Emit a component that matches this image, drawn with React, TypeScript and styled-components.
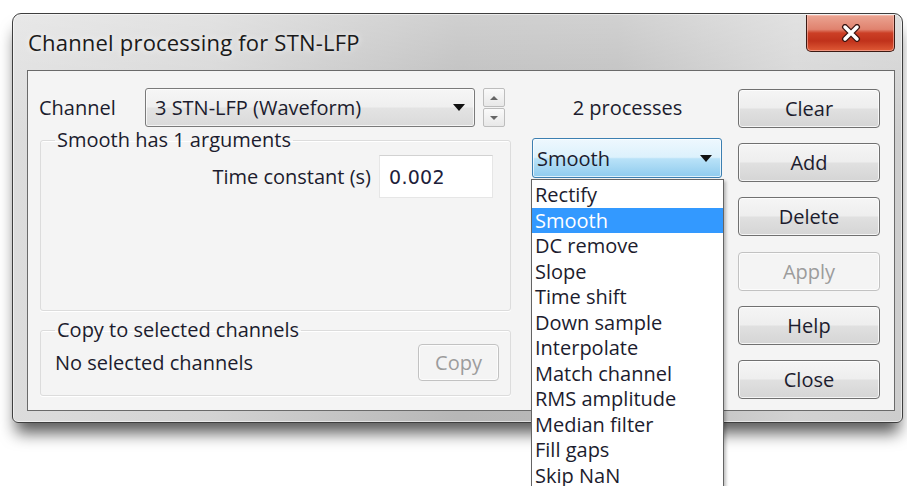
import React from "react";
import styled, { createGlobalStyle } from "styled-components";

const Global = createGlobalStyle`
  html, body {
    margin: 0;
    padding: 0;
    background: #ffffff;
  }
  body {
    font-family: "Open Sans", "Noto Sans", "DejaVu Sans", sans-serif;
    overflow: hidden;
  }
  * {
    box-sizing: border-box;
  }
`;

const Page = styled.div`
  width: 907px;
  height: 486px;
  padding: 13px 0 0 12px;
  overflow: hidden;
`;

const Window = styled.div`
  width: 891px;
  height: 410px;
  display: flex;
  flex-direction: column;
  padding: 0 7px 11px 14px;
  border: 1px solid #3e3e3e;
  border-radius: 9px 9px 6px 6px;
  background:
    linear-gradient(180deg, rgba(255, 255, 255, 0.35) 0%, rgba(255, 255, 255, 0) 30%),
    linear-gradient(90deg, #dcdcdc 0%, #d3d3d3 22%, #b7b7b7 50%, #b9b9b9 68%, #d2d2d2 88%, #cdcdcd 100%);
  box-shadow:
    inset 0 0 0 1px rgba(255, 255, 255, 0.55),
    0 14px 16px -4px rgba(0, 0, 0, 0.65);
`;

const TitleBar = styled.div`
  height: 56px;
  flex: none;
  display: flex;
  justify-content: space-between;
  align-items: flex-start;
`;

const Title = styled.div`
  align-self: center;
  margin-left: 1px;
  font-size: 22px;
  color: #1a1a1a;
  text-shadow: 0 0 6px rgba(255, 255, 255, 0.9);
  letter-spacing: 0.2px;
`;

const CloseButton = styled.div`
  width: 89px;
  height: 37px;
  margin-top: 1px;
  display: flex;
  align-items: center;
  justify-content: center;
  border: 1px solid #3c1a14;
  border-top: none;
  border-radius: 0 0 5px 5px;
  background: linear-gradient(
    180deg,
    #eba593 0%,
    #e0826e 40%,
    #cc3f26 50%,
    #c0321b 72%,
    #df5a36 100%
  );
  box-shadow: inset 0 0 0 1px rgba(255, 200, 190, 0.55);
`;

const Client = styled.div`
  flex: 1;
  border: 1px solid #6a6a6a;
  background: #f4f4f4;
  display: grid;
  grid-template-columns: 478px 191px 142px;
  column-gap: 15px;
  padding: 17px 14px 0 11px;
  align-items: start;
  color: #1c1c2e;
  font-size: 20px;
`;

const LeftColumn = styled.div`
  display: flex;
  flex-direction: column;
`;

const ChannelRow = styled.div`
  height: 39px;
  display: flex;
  align-items: center;
`;

const FieldLabel = styled.span<{ $width?: number }>`
  width: ${(p) => (p.$width ? `${p.$width}px` : "auto")};
  flex: none;
  white-space: nowrap;
`;

const Combo = styled.div<{ $width: number; $focused?: boolean }>`
  width: ${(p) => p.$width}px;
  height: ${(p) => (p.$focused ? 40 : 39)}px;
  display: flex;
  align-items: center;
  justify-content: space-between;
  padding: 0 9px 0 ${(p) => (p.$focused ? 4 : 9)}px;
  border: 1px solid ${(p) => (p.$focused ? "#3c7fb1" : "#7a7a7a")};
  border-radius: 3px;
  background: ${(p) =>
    p.$focused
      ? "linear-gradient(180deg, #eef8fe 0%, #dcf1fc 48%, #b9e2f8 52%, #8fcbee 100%)"
      : "linear-gradient(180deg, #f6f6f6 0%, #efefef 48%, #e3e3e3 52%, #dadada 100%)"};
  box-shadow: inset 0 0 0 1px rgba(255, 255, 255, 0.7);
  white-space: nowrap;
`;

const Arrow = styled.span`
  width: 0;
  height: 0;
  border-left: 6px solid transparent;
  border-right: 6px solid transparent;
  border-top: 7px solid #111;
  flex: none;
`;

const Spinner = styled.div`
  width: 22px;
  height: 39px;
  margin-left: 8px;
  display: flex;
  flex-direction: column;
  gap: 1px;
`;

const SpinHalf = styled.div<{ $up?: boolean }>`
  flex: 1;
  border: 1px solid #bdbdbd;
  border-radius: 2px;
  background: linear-gradient(180deg, #fafafa, #e8e8e8);
  display: flex;
  align-items: center;
  justify-content: center;
  &::after {
    content: "";
    width: 0;
    height: 0;
    border-left: 4px solid transparent;
    border-right: 4px solid transparent;
    ${(p) => (p.$up ? "border-bottom: 4px solid #666;" : "border-top: 4px solid #666;")}
  }
`;

const Group = styled.fieldset<{ $height: number; $gap: number }>`
  margin: ${(p) => p.$gap}px 0 0 1px;
  width: 471px;
  height: ${(p) => p.$height}px;
  padding: 0;
  border: 1px solid #dcdcdc;
  border-radius: 3px;
  box-shadow: 0 1px 0 #ffffff, inset 0 1px 0 #ffffff;
  min-width: 0;
`;

const Legend = styled.legend`
  margin-left: 14px;
  padding: 0 2px;
  line-height: 24px;
  white-space: nowrap;
`;

const ArgRow = styled.div`
  display: flex;
  justify-content: flex-end;
  align-items: center;
  gap: 8px;
  padding: 3px 17px 0 0;
`;

const EditBox = styled.div`
  width: 114px;
  height: 43px;
  display: flex;
  align-items: center;
  padding-left: 9px;
  background: #ffffff;
  border: 1px solid #e6e6e6;
  border-top-color: #d2d2d2;
  font-family: "DejaVu Sans", "Open Sans", sans-serif;
  font-size: 19px;
  letter-spacing: 0.3px;
  color: #20203a;
`;

const CopyRow = styled.div`
  height: 41px;
  display: flex;
  align-items: center;
  justify-content: space-between;
  padding: 0 11px 0 14px;
`;

const PushButton = styled.div<{ $disabled?: boolean; $width?: number }>`
  width: ${(p) => (p.$width ? `${p.$width}px` : "100%")};
  height: ${(p) => (p.$width ? 37 : 39)}px;
  display: flex;
  align-items: center;
  justify-content: center;
  border: 1px solid ${(p) => (p.$disabled ? "#c2c2c2" : "#707070")};
  border-radius: 4px;
  color: ${(p) => (p.$disabled ? "#9c9c9c" : "#1c1c2e")};
  background: ${(p) =>
    p.$disabled
      ? "#f4f4f4"
      : "linear-gradient(180deg, #f5f5f5 0%, #eeeeee 48%, #e0e0e0 52%, #d5d5d5 100%)"};
  box-shadow: inset 0 0 0 1px rgba(255, 255, 255, 0.75);
`;

const MiddleColumn = styled.div`
  display: flex;
  flex-direction: column;
`;

const CountLabel = styled.div`
  height: 39px;
  display: flex;
  align-items: center;
  justify-content: center;
`;

const ComboHolder = styled.div`
  position: relative;
  margin-top: 11px;
`;

const DropList = styled.ul`
  position: absolute;
  top: calc(100% + 1px);
  left: -1px;
  width: 193px;
  margin: 0;
  padding: 2px 0 0;
  list-style: none;
  background: #ffffff;
  border: 1px solid #646464;
  box-shadow: 2px 2px 3px rgba(0, 0, 0, 0.25);
  z-index: 5;
`;

const DropItem = styled.li<{ $selected?: boolean }>`
  height: 25.5px;
  line-height: 25.5px;
  padding-left: 3px;
  white-space: nowrap;
  background: ${(p) => (p.$selected ? "#3399ff" : "transparent")};
  color: ${(p) => (p.$selected ? "#ffffff" : "#1c1c2e")};
`;

const ButtonColumn = styled.div`
  display: flex;
  flex-direction: column;
  gap: 15.2px;
  padding-top: 1px;
`;

const processes = [
  "Rectify",
  "Smooth",
  "DC remove",
  "Slope",
  "Time shift",
  "Down sample",
  "Interpolate",
  "Match channel",
  "RMS amplitude",
  "Median filter",
  "Fill gaps",
  "Skip NaN",
];

const actions: { label: string; disabled?: boolean }[] = [
  { label: "Clear" },
  { label: "Add" },
  { label: "Delete" },
  { label: "Apply", disabled: true },
  { label: "Help" },
  { label: "Close" },
];

function CloseGlyph() {
  return (
    <svg width="20" height="18" viewBox="0 0 20 18">
      <path
        d="M4 3 L16 15 M16 3 L4 15"
        stroke="#3a1410"
        strokeWidth="6"
        strokeLinecap="round"
        fill="none"
      />
      <path
        d="M4 3 L16 15 M16 3 L4 15"
        stroke="#ffffff"
        strokeWidth="3.5"
        strokeLinecap="round"
        fill="none"
      />
    </svg>
  );
}

export default function App() {
  return (
    <Page>
      <Global />
      <Window>
        <TitleBar>
          <Title>Channel processing for STN-LFP</Title>
          <CloseButton>
            <CloseGlyph />
          </CloseButton>
        </TitleBar>
        <Client>
          <LeftColumn>
            <ChannelRow>
              <FieldLabel $width={106}>Channel</FieldLabel>
              <Combo $width={330}>
                <span>3 STN-LFP (Waveform)</span>
                <Arrow />
              </Combo>
              <Spinner>
                <SpinHalf $up />
                <SpinHalf />
              </Spinner>
            </ChannelRow>
            <Group $height={183} $gap={1}>
              <Legend>Smooth has 1 arguments</Legend>
              <ArgRow>
                <FieldLabel>Time constant (s)</FieldLabel>
                <EditBox>0.002</EditBox>
              </ArgRow>
            </Group>
            <Group $height={78} $gap={7}>
              <Legend>Copy to selected channels</Legend>
              <CopyRow>
                <FieldLabel>No selected channels</FieldLabel>
                <PushButton $disabled $width={81}>
                  Copy
                </PushButton>
              </CopyRow>
            </Group>
          </LeftColumn>
          <MiddleColumn>
            <CountLabel>2 processes</CountLabel>
            <ComboHolder>
              <Combo $width={190} $focused>
                <span>Smooth</span>
                <Arrow />
              </Combo>
              <DropList>
                {processes.map((name) => (
                  <DropItem key={name} $selected={name === "Smooth"}>
                    {name}
                  </DropItem>
                ))}
              </DropList>
            </ComboHolder>
          </MiddleColumn>
          <ButtonColumn>
            {actions.map((a) => (
              <PushButton key={a.label} $disabled={a.disabled}>
                {a.label}
              </PushButton>
            ))}
          </ButtonColumn>
        </Client>
      </Window>
    </Page>
  );
}
